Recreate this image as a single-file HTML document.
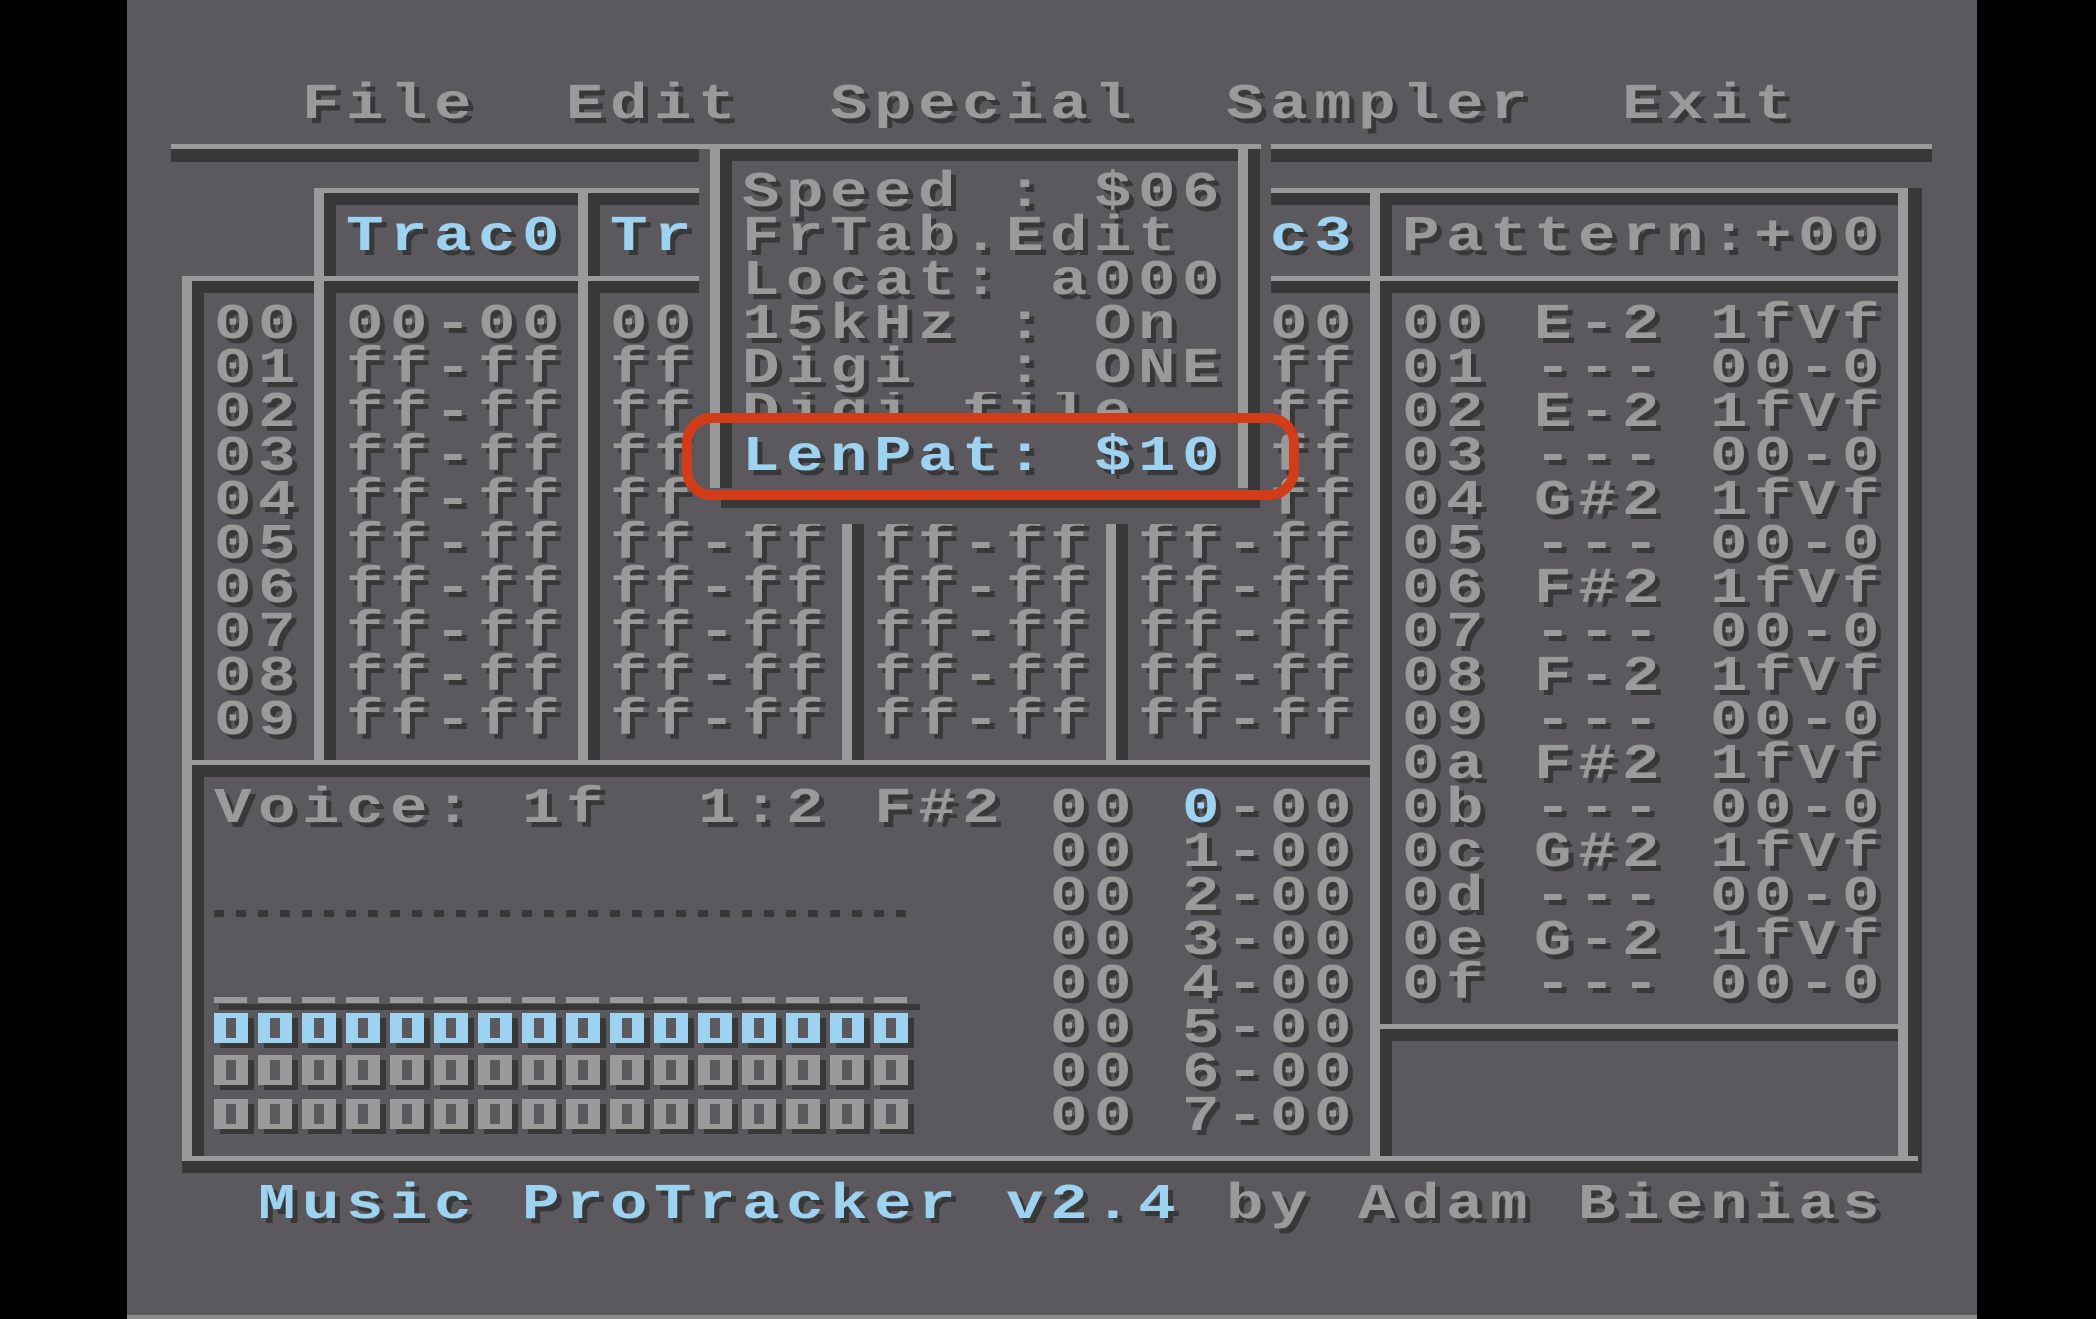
<!DOCTYPE html>
<html><head><meta charset="utf-8">
<style>
*{margin:0;padding:0;box-sizing:border-box}
html,body{width:2096px;height:1319px;overflow:hidden;background:#000}
#scr{position:absolute;left:127px;top:0;width:1850px;height:1316px;background:#5b595d}
.a{position:absolute}
.L{position:absolute;background:#9a9a9a}
.D{position:absolute;background:#383838}
.t{position:absolute;font:bold 50px/44px "Liberation Mono",monospace;letter-spacing:5.2px;color:#9a9a9a;text-shadow:4px 5px 0 #383838;white-space:pre;transform:scaleX(1.25);transform-origin:0 0}
.b{color:#9dd2f0}
.z{position:absolute;width:34px;height:30px;border-style:solid;border-width:5px 12px;border-color:#9a9a9a;box-shadow:6px 5px 0 #383838}
.zb{border-color:#9dd2f0}
</style></head><body>
<div id="scr"></div>
<div class="a" style="left:127px;top:1315px;width:1850px;height:4px;background:#8a8a8a"></div>

<div class="D" style="left:171px;top:149px;width:529px;height:13px"></div>
<div class="D" style="left:1271px;top:149px;width:661px;height:13px"></div>
<div class="D" style="left:314px;top:193px;width:1606px;height:12px"></div>
<div class="D" style="left:182px;top:281px;width:1738px;height:12px"></div>
<div class="D" style="left:182px;top:765px;width:1210px;height:12px"></div>
<div class="D" style="left:1370px;top:1029px;width:550px;height:12px"></div>
<div class="D" style="left:182px;top:1161px;width:1740px;height:12px"></div>
<div class="D" style="left:192px;top:276px;width:12px;height:897px"></div>
<div class="D" style="left:324px;top:188px;width:12px;height:589px"></div>
<div class="D" style="left:588px;top:188px;width:12px;height:589px"></div>
<div class="D" style="left:852px;top:188px;width:12px;height:589px"></div>
<div class="D" style="left:1116px;top:188px;width:12px;height:589px"></div>
<div class="D" style="left:1380px;top:188px;width:12px;height:985px"></div>
<div class="D" style="left:1908px;top:188px;width:14px;height:985px"></div>

<div class="L" style="left:171px;top:144px;width:529px;height:5px"></div>
<div class="L" style="left:1271px;top:144px;width:661px;height:5px"></div>
<div class="L" style="left:314px;top:188px;width:1594px;height:5px"></div>
<div class="L" style="left:182px;top:276px;width:1726px;height:5px"></div>
<div class="L" style="left:182px;top:760px;width:1198px;height:5px"></div>
<div class="L" style="left:1370px;top:1024px;width:538px;height:5px"></div>
<div class="L" style="left:182px;top:1156px;width:1736px;height:5px"></div>
<div class="L" style="left:182px;top:276px;width:10px;height:885px"></div>
<div class="L" style="left:314px;top:188px;width:10px;height:577px"></div>
<div class="L" style="left:578px;top:188px;width:10px;height:577px"></div>
<div class="L" style="left:842px;top:188px;width:10px;height:577px"></div>
<div class="L" style="left:1106px;top:188px;width:10px;height:577px"></div>
<div class="L" style="left:1370px;top:188px;width:10px;height:973px"></div>
<div class="L" style="left:1898px;top:188px;width:10px;height:973px"></div>

<div class="t" style="left:302px;top:84px">File  Edit  Special  Sampler  Exit</div>

<div class="t b" style="left:346px;top:216px">Trac0</div>
<div class="t b" style="left:610px;top:216px">Trac1</div>
<div class="t b" style="left:874px;top:216px">Trac2</div>
<div class="t b" style="left:1138px;top:216px">Trac3</div>
<div class="t" style="left:1402px;top:216px">Pattern:+00</div>

<div class="t" style="left:214px;top:304px">00
01
02
03
04
05
06
07
08
09</div>
<div class="t" style="left:346px;top:304px">00-00
ff-ff
ff-ff
ff-ff
ff-ff
ff-ff
ff-ff
ff-ff
ff-ff
ff-ff</div>
<div class="t" style="left:610px;top:304px">00-00
ff-ff
ff-ff
ff-ff
ff-ff
ff-ff
ff-ff
ff-ff
ff-ff
ff-ff</div>
<div class="t" style="left:874px;top:304px">00-00
ff-ff
ff-ff
ff-ff
ff-ff
ff-ff
ff-ff
ff-ff
ff-ff
ff-ff</div>
<div class="t" style="left:1138px;top:304px">00-00
ff-ff
ff-ff
ff-ff
ff-ff
ff-ff
ff-ff
ff-ff
ff-ff
ff-ff</div>

<div class="t" style="left:1402px;top:304px">00 E-2 1fVf
01 --- 00-0
02 E-2 1fVf
03 --- 00-0
04 G#2 1fVf
05 --- 00-0
06 F#2 1fVf
07 --- 00-0
08 F-2 1fVf
09 --- 00-0
0a F#2 1fVf
0b --- 00-0
0c G#2 1fVf
0d --- 00-0
0e G-2 1fVf
0f --- 00-0</div>

<div class="t" style="left:214px;top:788px">Voice: 1f  1:2 F#2</div>
<div class="t" style="left:1050px;top:788px">00
00
00
00
00
00
00
00</div>
<div class="t b" style="left:1182px;top:788px">0</div>
<div class="t" style="left:1182px;top:832px">1
2
3
4
5
6
7</div>
<div class="t" style="left:1226px;top:788px">-00
-00
-00
-00
-00
-00
-00
-00</div>
<div class="a" style="left:214px;top:910px;width:700px;height:7px;background:repeating-linear-gradient(90deg,#383838 0 10px,transparent 10px 22px)"></div>
<div class="a" style="left:219px;top:1004px;width:701px;height:6px;background:#383838"></div>
<div class="a" style="left:214px;top:997px;width:700px;height:6px;background:repeating-linear-gradient(90deg,#9a9a9a 0 33px,transparent 33px 44px)"></div>

<div class="t b" style="left:258px;top:1184px">Music ProTracker v2.4</div>
<div class="t" style="left:1226px;top:1184px">by Adam Bienias</div>

<div class="a" style="left:699px;top:128px;width:572px;height:396px;background:#5b595d"></div>
<div class="L" style="left:699px;top:144px;width:562px;height:5px"></div>
<div class="D" style="left:720px;top:149px;width:528px;height:12px"></div>
<div class="L" style="left:710px;top:144px;width:10px;height:344px"></div>
<div class="D" style="left:720px;top:149px;width:12px;height:339px"></div>
<div class="L" style="left:1238px;top:144px;width:10px;height:344px"></div>
<div class="D" style="left:1248px;top:149px;width:12px;height:351px"></div>
<div class="D" style="left:721px;top:496px;width:539px;height:12px"></div>
<div class="t" style="left:742px;top:172px">Speed : $06
FrTab.Edit
Locat: a000
15kHz : On
Digi  : ONE</div>
<div class="a" style="left:742px;top:392px;width:500px;height:26px;overflow:hidden"><div class="t" style="left:0;top:0">Digi file</div></div>
<div class="t b" style="left:742px;top:436px">LenPat: $10</div>

<div class="a" style="left:682px;top:413px;width:617px;height:87px;border:10px solid #d33c18;border-radius:30px"></div>

<div class="z zb" style="left:214px;top:1013px"></div><div class="z zb" style="left:258px;top:1013px"></div><div class="z zb" style="left:302px;top:1013px"></div><div class="z zb" style="left:346px;top:1013px"></div><div class="z zb" style="left:390px;top:1013px"></div><div class="z zb" style="left:434px;top:1013px"></div><div class="z zb" style="left:478px;top:1013px"></div><div class="z zb" style="left:522px;top:1013px"></div><div class="z zb" style="left:566px;top:1013px"></div><div class="z zb" style="left:610px;top:1013px"></div><div class="z zb" style="left:654px;top:1013px"></div><div class="z zb" style="left:698px;top:1013px"></div><div class="z zb" style="left:742px;top:1013px"></div><div class="z zb" style="left:786px;top:1013px"></div><div class="z zb" style="left:830px;top:1013px"></div><div class="z zb" style="left:874px;top:1013px"></div>
<div class="z" style="left:214px;top:1055px"></div><div class="z" style="left:258px;top:1055px"></div><div class="z" style="left:302px;top:1055px"></div><div class="z" style="left:346px;top:1055px"></div><div class="z" style="left:390px;top:1055px"></div><div class="z" style="left:434px;top:1055px"></div><div class="z" style="left:478px;top:1055px"></div><div class="z" style="left:522px;top:1055px"></div><div class="z" style="left:566px;top:1055px"></div><div class="z" style="left:610px;top:1055px"></div><div class="z" style="left:654px;top:1055px"></div><div class="z" style="left:698px;top:1055px"></div><div class="z" style="left:742px;top:1055px"></div><div class="z" style="left:786px;top:1055px"></div><div class="z" style="left:830px;top:1055px"></div><div class="z" style="left:874px;top:1055px"></div>
<div class="z" style="left:214px;top:1099px"></div><div class="z" style="left:258px;top:1099px"></div><div class="z" style="left:302px;top:1099px"></div><div class="z" style="left:346px;top:1099px"></div><div class="z" style="left:390px;top:1099px"></div><div class="z" style="left:434px;top:1099px"></div><div class="z" style="left:478px;top:1099px"></div><div class="z" style="left:522px;top:1099px"></div><div class="z" style="left:566px;top:1099px"></div><div class="z" style="left:610px;top:1099px"></div><div class="z" style="left:654px;top:1099px"></div><div class="z" style="left:698px;top:1099px"></div><div class="z" style="left:742px;top:1099px"></div><div class="z" style="left:786px;top:1099px"></div><div class="z" style="left:830px;top:1099px"></div><div class="z" style="left:874px;top:1099px"></div>
</body></html>
